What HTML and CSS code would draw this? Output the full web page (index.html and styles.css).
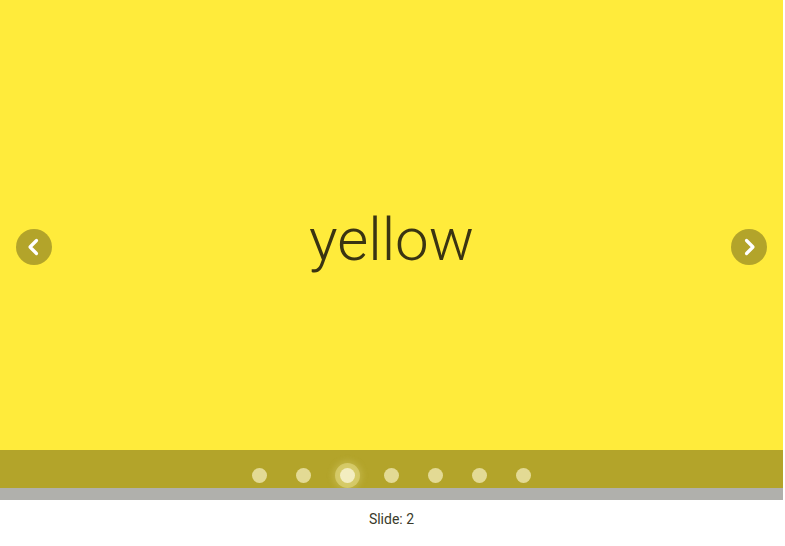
FILE: index.html
```html
<!DOCTYPE html>
<html>
<head>
<meta charset="utf-8">
<link rel="stylesheet" href="styles.css">
</head>
<body>
<div class="slider">
  <div class="slide">
    <span class="label">yellow</span>
    <button class="arrow prev" aria-label="previous">
      <svg width="36" height="36" viewBox="0 0 36 36"><path d="M20.5 11.5 L14 18 L20.5 24.5" fill="none" stroke="#fff" stroke-width="3.2" stroke-linecap="round" stroke-linejoin="round"/></svg>
    </button>
    <button class="arrow next" aria-label="next">
      <svg width="36" height="36" viewBox="0 0 36 36"><path d="M15.5 11.5 L22 18 L15.5 24.5" fill="none" stroke="#fff" stroke-width="3.2" stroke-linecap="round" stroke-linejoin="round"/></svg>
    </button>
  </div>
  <div class="dots">
    <span class="dot"></span>
    <span class="dot"></span>
    <span class="dot active"></span>
    <span class="dot"></span>
    <span class="dot"></span>
    <span class="dot"></span>
    <span class="dot"></span>
  </div>
  <div class="track"></div>
</div>
<div class="caption">Slide: 2</div>
</body>
</html>
```
FILE: styles.css
```css
html, body {
  margin: 0;
  padding: 0;
  background: #ffffff;
  font-family: Roboto, "Liberation Sans", sans-serif;
}
.slider {
  width: 783px;
  display: flex;
  flex-direction: column;
}
.slide {
  position: relative;
  height: 450px;
  background: #ffeb3b;
  display: flex;
  align-items: center;
  justify-content: center;
}
.label {
  font-weight: 300;
  font-size: 60px;
  color: #3a3412;
  line-height: 1;
  margin-top: 30px;
}
.arrow {
  position: absolute;
  top: 229px;
  width: 36px;
  height: 36px;
  padding: 0;
  border: 0;
  border-radius: 50%;
  background: #b3a42a;
  display: flex;
  align-items: center;
  justify-content: center;
}
.prev { left: 16px; }
.next { right: 16px; }
.dots {
  height: 38px;
  background: #b3a42a;
  display: flex;
  align-items: center;
  justify-content: center;
  gap: 29px;
  padding-top: 12px;
  box-sizing: border-box;
}
.dot {
  width: 15px;
  height: 15px;
  border-radius: 50%;
  background: #e3da94;
}
.dot.active {
  background: #f3edc0;
  box-shadow: 0 0 0 5px rgba(240, 230, 150, 0.45), 0 0 6px 7px rgba(240, 230, 150, 0.25);
}
.track {
  height: 12px;
  background: #b0b0ac;
}
.caption {
  width: 783px;
  text-align: center;
  font-size: 14px;
  color: #3a3a2a;
  padding-top: 11px;
}
```
